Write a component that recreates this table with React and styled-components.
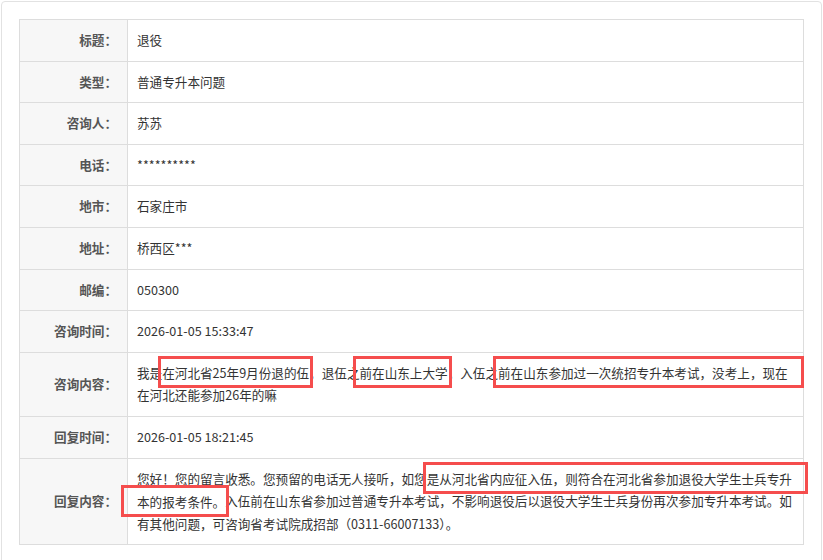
import React from 'react';
import styled, {createGlobalStyle} from 'styled-components';

const GlobalStyle = createGlobalStyle`
  html, body {
    margin: 0;
    background: #fff;
  }
  body {
    font-family: "Noto Sans CJK SC", "Liberation Sans", sans-serif;
    font-size: 12.6px;
    color: #333;
  }
`;

const Page = styled.div`
  padding: 1px;
`;

const Card = styled.div`
  border: 1px solid #e2e2e2;
  border-radius: 4px;
  padding: 17px;
  min-height: 600px;
`;

const Table = styled.table`
  width: 100%;
  border-collapse: collapse;
  table-layout: fixed;
`;

const Label = styled.th`
  width: 87px;
  padding: 9px 10px;
  border: 1px solid #ddd;
  background: #f7f7f7;
  color: #555;
  font-weight: bold;
  text-align: right;
  line-height: 22.4px;
  vertical-align: middle;
`;

const Value = styled.td`
  padding: 9px 8px 9px 9px;
  border: 1px solid #ddd;
  color: #333;
  line-height: 22.6px;
  vertical-align: middle;
`;

const Mark = styled.span`
  outline: 3.5px solid #f54d4d;
  outline-offset: 1.5px;
  padding: 2.5px ${p => p.$right || 0}px 2.5px ${p => p.$left || 0}px;
  margin: 0 -${p => p.$right || 0}px 0 -${p => p.$left || 0}px;
`;

const rows = [
  ['标题：', '退役'],
  ['类型：', '普通专升本问题'],
  ['咨询人：', '苏苏'],
  ['电话：', '**********'],
  ['地市：', '石家庄市'],
  ['地址：', '桥西区***'],
  ['邮编：', '050300'],
  ['咨询时间：', '2026-01-05 15:33:47'],
  ['咨询内容：', (
    <>
      我是<Mark>在河北省25年9月份退的伍</Mark>，退伍之<Mark $left={2}>前在山东上大学</Mark>，入伍之<Mark $left={1} $right={12}>前在山东参加过一次统招专升本考试，没考上，现在</Mark>在河北还能参加26年的嘛
    </>
  )],
  ['回复时间：', '2026-01-05 18:21:45'],
  ['回复内容：', (
    <>
      您好！您的留言收悉。您预留的电话无人接听，如您<Mark $right={12}>是从河北省内应征入伍，则符合在河北省参加退役大学生士兵专升</Mark><Mark $left={12}>本的报考条件。</Mark>入伍前在山东省参加过普通专升本考试，不影响退役后以退役大学生士兵身份再次参加专升本考试。如有其他问题，可咨询省考试院成招部（0311-66007133）。
    </>
  )]
];

export default function App() {
  return (
    <Page>
      <GlobalStyle/>
      <Card>
        <Table>
          <tbody>
            {rows.map(([label, value]) => (
              <tr key={label}>
                <Label>{label}</Label>
                <Value>{value}</Value>
              </tr>
            ))}
          </tbody>
        </Table>
      </Card>
    </Page>
  );
}
